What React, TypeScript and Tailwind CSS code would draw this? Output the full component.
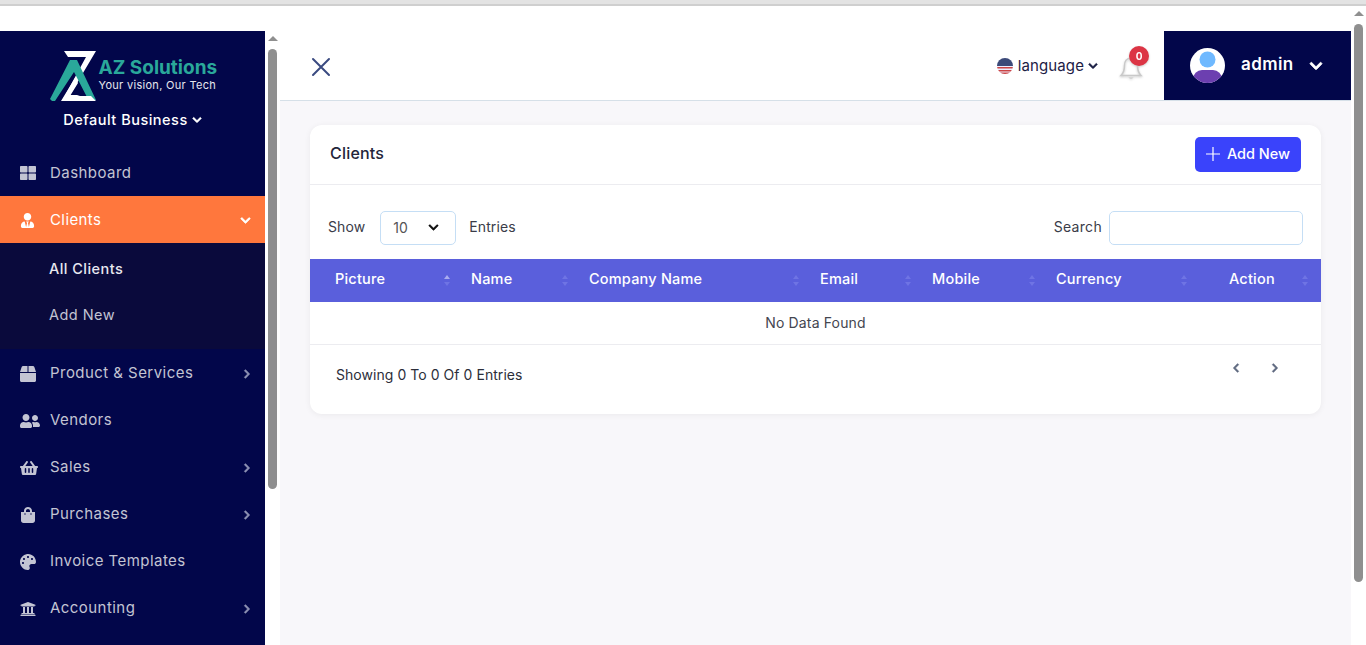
import { FaChevronDown, FaChevronLeft, FaChevronRight, FaThLarge, FaUserTie, FaBox, FaUserFriends, FaShoppingBasket, FaShoppingBag, FaPalette, FaUniversity } from "react-icons/fa";

const poppins = "font-['Inter','Open_Sans',sans-serif]";

function Logo() {
  return (
    <svg width="48" height="50" viewBox="0 0 48 50" className="shrink-0">
      <path d="M14 0H46L20 44H30L12 50L36 6H18Z" fill="#fff" />
      <path d="M0 48L20 9H27L46 49L39 50L24 21L5 50H2Z" fill="#2aa89a" />
      <path d="M11 50L25 27L28 32L20 45H41L46 50Z" fill="#fff" />
    </svg>
  );
}

const menu = [
  { label: "Product & Services", icon: FaBox, size: "text-[16px]", arrow: true },
  { label: "Vendors", icon: FaUserFriends, size: "text-[20px]", arrow: false },
  { label: "Sales", icon: FaShoppingBasket, size: "text-[18px]", arrow: true },
  { label: "Purchases", icon: FaShoppingBag, size: "text-[16px]", arrow: true },
  { label: "Invoice Templates", icon: FaPalette, size: "text-[16px]", arrow: false },
  { label: "Accounting", icon: FaUniversity, size: "text-[16px]", arrow: true },
];

const columns = [
  { label: "Picture", cls: "w-[140px] pl-[25px]" },
  { label: "Name", cls: "w-[118px] pl-[21px]" },
  { label: "Company Name", cls: "w-[231px] pl-[21px]" },
  { label: "Email", cls: "w-[112px] pl-[21px]" },
  { label: "Mobile", cls: "w-[124px] pl-[21px]" },
  { label: "Currency", cls: "w-[152px] pl-[21px]" },
  { label: "Action", cls: "flex-1 pl-[42px] pr-[13px]" },
];

function Sort({ active }: { active: boolean }) {
  return (
    <div className="flex flex-col gap-[3px]">
      <span className={`h-0 w-0 border-x-[3px] border-b-[4px] border-x-transparent ${active ? "border-b-[#a9acef]" : "border-b-[#6f74e4]"}`} />
      <span className="h-0 w-0 border-x-[3px] border-t-[4px] border-x-transparent border-t-[#6f74e4]" />
    </div>
  );
}

function Scrollbar({ thumb }: { thumb: string }) {
  return (
    <div className="flex w-[15px] shrink-0 flex-col items-center bg-white">
      <span className="mt-[5px] h-0 w-0 border-x-[5px] border-b-[5px] border-x-transparent border-b-[#8f8f8f]" />
      <div className={`mt-[8px] w-[9px] rounded-[5px] bg-[#8f8f8f] ${thumb}`} />
    </div>
  );
}

export default function App() {
  return (
    <div className={`flex h-[645px] w-[1366px] flex-col overflow-hidden bg-white ${poppins}`}>
      <div className="h-[6px] shrink-0 border-b-2 border-[#cfcfcf] bg-[#e3e3e3]" />
      <div className="flex min-h-0 flex-1">
        <div className="flex w-[280px] shrink-0 pt-[25px]">
          <aside className="w-[265px] shrink-0 overflow-hidden bg-[#02064a]">
            <div className="flex flex-col items-center pt-[20px]">
              <div className="flex h-[50px] w-[166px] items-center gap-[1px]">
                <Logo />
                <div className="flex flex-col pb-[3px]">
                  <span className="text-[19px] leading-[20px] font-bold whitespace-nowrap text-[#2aa89a]">AZ Solutions</span>
                  <span className="text-[11px] leading-[14px] tracking-[0.3px] whitespace-nowrap text-[#e6e6ee]">Your vision, Our Tech</span>
                </div>
              </div>
              <div className="mt-[8px] flex items-center gap-[4px] text-[14.5px] leading-[22px] font-medium tracking-[0.5px] text-white">
                Default Business <FaChevronDown className="text-[10px] stroke-[30px]" />
              </div>
            </div>
            <div className="mt-[19px] flex h-[46px] items-center pl-[20px] text-[15px] tracking-[0.45px] text-[#c3c4d3]">
              <div className="w-[30px]"><FaThLarge className="text-[16px]" /></div>
              <span>Dashboard</span>
            </div>
            <div className="flex h-[47px] items-center bg-[#ff773d] pt-[1px] pr-[14px] pl-[20px] text-[15px] tracking-[0.4px] text-white">
              <div className="w-[30px]"><FaUserTie className="text-[15px]" /></div>
              <span className="flex-1">Clients</span>
              <FaChevronDown className="text-[11px] stroke-[30px]" />
            </div>
            <div className="h-[106px] bg-[#0a0a3c] text-[14.5px] tracking-[0.45px]">
              <div className="flex h-[51px] items-center pl-[49px] font-medium text-[#e8e8f0]">All Clients</div>
              <div className="flex h-[42px] items-center pl-[49px] text-[#c3c4d3]">Add New</div>
            </div>
            {menu.map((item) => (
              <div key={item.label} className="flex h-[47px] items-center pt-[2px] pr-[13px] pl-[20px] text-[15px] tracking-[0.45px] text-[#c3c4d3]">
                <div className="w-[30px]"><item.icon className={item.size} /></div>
                <span className="flex-1">{item.label}</span>
                {item.arrow && <FaChevronRight className="text-[10px] stroke-[30px] text-[#8f93b5]" />}
              </div>
            ))}
          </aside>
          <Scrollbar thumb="h-[440px]" />
        </div>
        <main className="flex min-w-0 flex-1 flex-col bg-[#f8f7fa]">
          <header className="flex h-[95px] shrink-0 items-end justify-between border-b border-[#d6e0e8] bg-white">
            <svg className="mb-[23px] ml-[31px]" width="20" height="20" viewBox="0 0 20 20">
              <path d="M2 2L18 18M18 2L2 18" stroke="#3a4a80" strokeWidth="2" strokeLinecap="round" />
            </svg>
            <div className="flex items-end">
              <div className="mb-[24px] flex items-center text-[15px] leading-[20px] tracking-[0.1px] text-[#1c2045]">
                <svg className="mr-[5px]" width="16" height="16" viewBox="0 0 16 16">
                  <clipPath id="flag"><circle cx="8" cy="8" r="8" /></clipPath>
                  <g clipPath="url(#flag)">
                    <rect width="16" height="16" fill="#eef" />
                    <rect y="9" width="16" height="1.5" fill="#c44" />
                    <rect y="12" width="16" height="1.5" fill="#c44" />
                    <rect y="14.5" width="16" height="1.5" fill="#c44" />
                    <rect width="16" height="8" fill="#3c4a78" />
                  </g>
                </svg>
                language
                <FaChevronDown className="ml-[4px] text-[10px] stroke-[30px]" />
              </div>
              <div className="relative mr-[20px] mb-[19px] ml-[20px] drop-shadow-[0_1px_1px_rgba(0,0,0,0.2)]">
                <svg width="26" height="26" viewBox="0 0 26 26" fill="none">
                  <path d="M13 3C8.6 3 6.5 6.6 6.5 10.5C6.5 16 5.5 18 3 20.5H23C20.5 18 19.5 16 19.5 10.5C19.5 6.6 17.4 3 13 3Z" stroke="#c9c9c9" strokeWidth="1.5" />
                  <path d="M10.5 22.5C11 24 15 24 15.5 22.5Z" fill="#c9c9c9" />
                </svg>
                <span className="absolute -top-[9px] left-[11px] flex h-[20px] w-[20px] items-center justify-center rounded-full bg-[#dc3545] text-[10px] font-bold text-white">0</span>
              </div>
              <div className="flex h-[69px] w-[187px] items-center bg-[#02064a] pl-[26px]">
                <svg width="35" height="35" viewBox="0 0 35 35">
                  <clipPath id="avatar"><circle cx="17.5" cy="17.5" r="17.5" /></clipPath>
                  <g clipPath="url(#avatar)">
                    <rect width="35" height="35" fill="#fff" />
                    <circle cx="17.5" cy="11.5" r="8" fill="#6fb9ff" />
                    <rect x="3" y="22" width="29" height="18" rx="9" fill="#6c3fb0" />
                  </g>
                </svg>
                <span className="mb-[2px] ml-[16px] text-[17px] font-semibold tracking-[0.4px] text-white">admin</span>
                <FaChevronDown className="ml-[15px] text-[14px] stroke-[30px] text-white" />
              </div>
            </div>
          </header>
          <div className="px-[30px] pt-[24px]">
            <div className="h-[289px] overflow-hidden rounded-xl bg-white shadow-[0_1px_6px_rgba(0,0,0,0.06)]">
              <div className="flex h-[60px] items-center justify-between border-b border-[#ececf0] pr-[20px] pl-[20px]">
                <span className="pb-[3px] text-[16px] font-medium tracking-[0.2px] text-[#23253a]">Clients</span>
                <button className="flex h-[35px] w-[106px] items-center justify-center gap-[7px] rounded-[5px] bg-[#3a43fb] pb-[1px] text-[14.5px] font-medium text-white">
                  <svg width="14" height="14" viewBox="0 0 14 14"><path d="M7 0V14M0 7H14" stroke="#fff" strokeWidth="1.2" /></svg>
                  Add New
                </button>
              </div>
              <div className="flex h-[74px] items-center justify-between pt-[12px] pr-[18px] pl-[18px] text-[14px] tracking-[0.1px] text-[#3a3c48]">
                <div className="flex items-center">
                  <span className="pb-[3px]">Show</span>
                  <div className="mr-[13px] ml-[15px] flex h-[34px] w-[76px] items-center justify-between rounded-[5px] border border-[#c5def5] pr-[16px] pb-[2px] pl-[12px] text-[#555]">
                    10
                    <FaChevronDown className="text-[11px] stroke-[20px] text-[#111]" />
                  </div>
                  <span className="pb-[3px]">Entries</span>
                </div>
                <div className="flex items-center">
                  <span className="mr-[7px] pb-[3px] tracking-[0.3px]">Search</span>
                  <div className="h-[34px] w-[194px] rounded-[5px] border border-[#c5def5]" />
                </div>
              </div>
              <div className="flex h-[43px] items-center bg-[#5a5fdc] text-[14.5px] font-medium tracking-[0.2px] text-white">
                {columns.map((c) => (
                  <div key={c.label} className={`flex items-center justify-between ${c.cls}`}>
                    <span className="pb-[3px]">{c.label}</span>
                    <Sort active={c.label === "Picture"} />
                  </div>
                ))}
              </div>
              <div className="flex h-[43px] items-center justify-center border-b border-[#ececf0] pb-[2px] text-[14px] tracking-[0.15px] text-[#444650]">No Data Found</div>
              <div className="flex items-start justify-between pr-[41px] pl-[26px]">
                <span className="mt-[19px] text-[14px] tracking-[0.05px] text-[#2c2e3a]">Showing 0 To 0 Of 0 Entries</span>
                <div className="mt-[18px] flex gap-[29px] text-[10px] text-[#5f6a80]">
                  <FaChevronLeft className="stroke-[30px]" />
                  <FaChevronRight className="stroke-[30px]" />
                </div>
              </div>
            </div>
          </div>
        </main>
        <Scrollbar thumb="h-[558px]" />
      </div>
    </div>
  );
}
